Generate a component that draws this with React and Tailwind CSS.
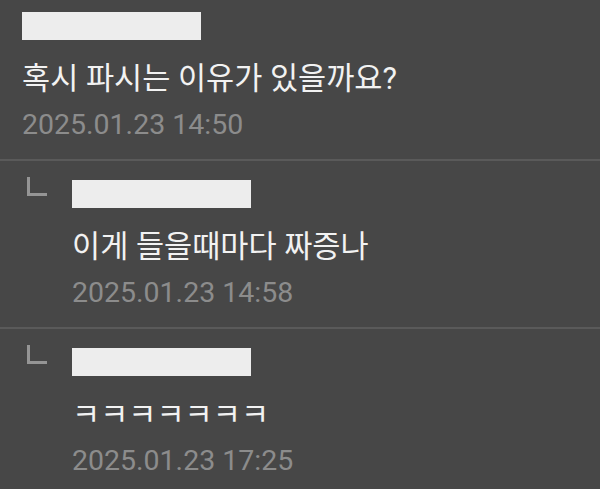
import React from "react";

const comments = [
  { reply: false, text: "혹시 파시는 이유가 있을까요?", date: "2025.01.23 14:50" },
  { reply: true, text: "이게 들을때마다 짜증나", date: "2025.01.23 14:58" },
  { reply: true, text: "ㅋㅋㅋㅋㅋㅋㅋ", date: "2025.01.23 17:25" },
];

const Comment = ({ reply, text, date }) => {
  return (
    <div className="flex border-b-2 border-[#5a5a5a] pt-[19px] pb-[14px]">
      {reply && (
        <div className="w-[72px] shrink-0 pl-[27px]">
          <div className="-mt-[3px] h-[19px] w-[20px] border-b-[3px] border-l-[3px] border-[#959595]"></div>
        </div>
      )}
      <div className={reply ? "flex-1" : "flex-1 pl-[22px]"}>
        <div className="h-[28px] w-[179px] bg-[#ededed]"></div>
        <p className="mt-[19px] h-[40px] text-[30.6px] leading-[40px] text-[#f2f2f2] whitespace-nowrap">
          {text}
        </p>
        <p className="mt-[6px] h-[40px] text-[28.5px] leading-[40px] text-[#8c8c8c] whitespace-nowrap">
          {date}
        </p>
      </div>
    </div>
  );
};

const App = () => {
  return (
    <div
      className="h-[489px] w-[600px] overflow-hidden bg-[#474747]"
      style={{ fontFamily: 'Roboto, "Noto Sans CJK KR", sans-serif' }}
    >
      <div className="-mt-[7px]">
        {comments.map((c, i) => (
          <Comment key={i} {...c} />
        ))}
      </div>
    </div>
  );
};

export default App;
